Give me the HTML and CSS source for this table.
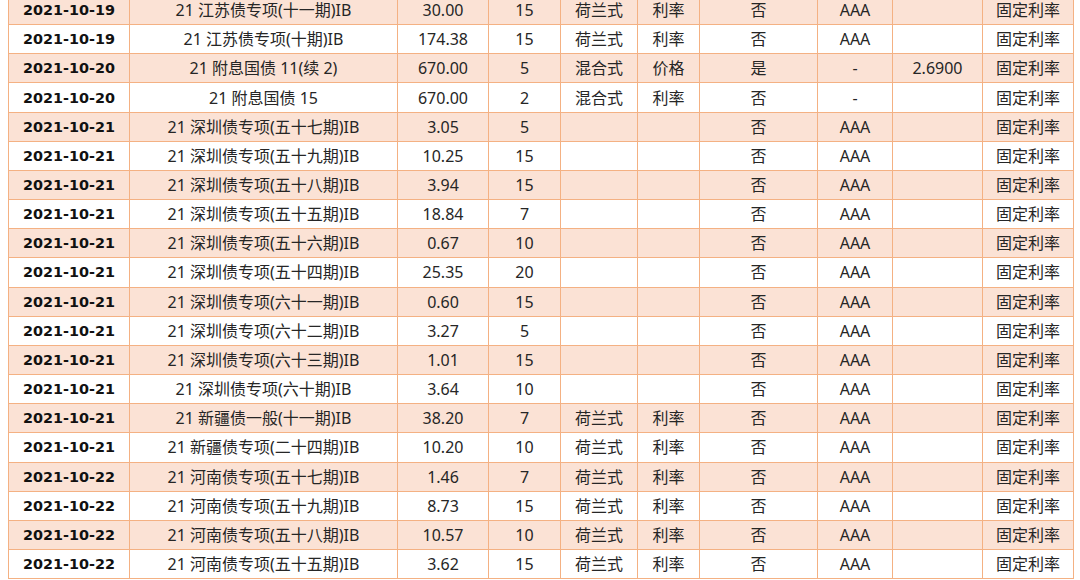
FILE: index.html
```html
<!DOCTYPE html>
<html lang="zh-CN">
<head>
<meta charset="utf-8">
<title>债券发行表</title>
<link rel="stylesheet" href="styles.css">
</head>
<body>
<table class="bonds">
<colgroup>
<col class="c-date"><col class="c-name"><col class="c-amt"><col class="c-term"><col class="c-type"><col class="c-mode"><col class="c-flag"><col class="c-rate"><col class="c-px"><col class="c-kind">
</colgroup>
<tbody>
<tr><td class="d">2021-10-19</td><td>21 江苏债专项(十一期)IB</td><td>30.00</td><td>15</td><td>荷兰式</td><td>利率</td><td>否</td><td>AAA</td><td></td><td>固定利率</td></tr>
<tr><td class="d">2021-10-19</td><td>21 江苏债专项(十期)IB</td><td>174.38</td><td>15</td><td>荷兰式</td><td>利率</td><td>否</td><td>AAA</td><td></td><td>固定利率</td></tr>
<tr><td class="d">2021-10-20</td><td>21 附息国债 11(续 2)</td><td>670.00</td><td>5</td><td>混合式</td><td>价格</td><td>是</td><td>-</td><td>2.6900</td><td>固定利率</td></tr>
<tr><td class="d">2021-10-20</td><td>21 附息国债 15</td><td>670.00</td><td>2</td><td>混合式</td><td>利率</td><td>否</td><td>-</td><td></td><td>固定利率</td></tr>
<tr><td class="d">2021-10-21</td><td>21 深圳债专项(五十七期)IB</td><td>3.05</td><td>5</td><td></td><td></td><td>否</td><td>AAA</td><td></td><td>固定利率</td></tr>
<tr><td class="d">2021-10-21</td><td>21 深圳债专项(五十九期)IB</td><td>10.25</td><td>15</td><td></td><td></td><td>否</td><td>AAA</td><td></td><td>固定利率</td></tr>
<tr><td class="d">2021-10-21</td><td>21 深圳债专项(五十八期)IB</td><td>3.94</td><td>15</td><td></td><td></td><td>否</td><td>AAA</td><td></td><td>固定利率</td></tr>
<tr><td class="d">2021-10-21</td><td>21 深圳债专项(五十五期)IB</td><td>18.84</td><td>7</td><td></td><td></td><td>否</td><td>AAA</td><td></td><td>固定利率</td></tr>
<tr><td class="d">2021-10-21</td><td>21 深圳债专项(五十六期)IB</td><td>0.67</td><td>10</td><td></td><td></td><td>否</td><td>AAA</td><td></td><td>固定利率</td></tr>
<tr><td class="d">2021-10-21</td><td>21 深圳债专项(五十四期)IB</td><td>25.35</td><td>20</td><td></td><td></td><td>否</td><td>AAA</td><td></td><td>固定利率</td></tr>
<tr><td class="d">2021-10-21</td><td>21 深圳债专项(六十一期)IB</td><td>0.60</td><td>15</td><td></td><td></td><td>否</td><td>AAA</td><td></td><td>固定利率</td></tr>
<tr><td class="d">2021-10-21</td><td>21 深圳债专项(六十二期)IB</td><td>3.27</td><td>5</td><td></td><td></td><td>否</td><td>AAA</td><td></td><td>固定利率</td></tr>
<tr><td class="d">2021-10-21</td><td>21 深圳债专项(六十三期)IB</td><td>1.01</td><td>15</td><td></td><td></td><td>否</td><td>AAA</td><td></td><td>固定利率</td></tr>
<tr><td class="d">2021-10-21</td><td>21 深圳债专项(六十期)IB</td><td>3.64</td><td>10</td><td></td><td></td><td>否</td><td>AAA</td><td></td><td>固定利率</td></tr>
<tr><td class="d">2021-10-21</td><td>21 新疆债一般(十一期)IB</td><td>38.20</td><td>7</td><td>荷兰式</td><td>利率</td><td>否</td><td>AAA</td><td></td><td>固定利率</td></tr>
<tr><td class="d">2021-10-21</td><td>21 新疆债专项(二十四期)IB</td><td>10.20</td><td>10</td><td>荷兰式</td><td>利率</td><td>否</td><td>AAA</td><td></td><td>固定利率</td></tr>
<tr><td class="d">2021-10-22</td><td>21 河南债专项(五十七期)IB</td><td>1.46</td><td>7</td><td>荷兰式</td><td>利率</td><td>否</td><td>AAA</td><td></td><td>固定利率</td></tr>
<tr><td class="d">2021-10-22</td><td>21 河南债专项(五十九期)IB</td><td>8.73</td><td>15</td><td>荷兰式</td><td>利率</td><td>否</td><td>AAA</td><td></td><td>固定利率</td></tr>
<tr><td class="d">2021-10-22</td><td>21 河南债专项(五十八期)IB</td><td>10.57</td><td>10</td><td>荷兰式</td><td>利率</td><td>否</td><td>AAA</td><td></td><td>固定利率</td></tr>
<tr><td class="d">2021-10-22</td><td>21 河南债专项(五十五期)IB</td><td>3.62</td><td>15</td><td>荷兰式</td><td>利率</td><td>否</td><td>AAA</td><td></td><td>固定利率</td></tr>
</tbody>
</table>
</body>
</html>
```
FILE: styles.css
```css
html, body {
  margin: 0;
  padding: 0;
  background: #ffffff;
}
body {
  overflow: hidden;
  height: 580px;
}
.bonds {
  margin: -5px 0 0 8px;
  border-collapse: collapse;
  table-layout: fixed;
  width: 1066px;
  font-family: "Noto Sans", "Noto Sans CJK SC", sans-serif;
  font-size: 16px;
  color: #262626;
}
.c-date { width: 121px; }
.c-name { width: 268px; }
.c-amt  { width: 91px; }
.c-term { width: 72px; }
.c-type { width: 77px; }
.c-mode { width: 62px; }
.c-flag { width: 118px; }
.c-rate { width: 75px; }
.c-px   { width: 90px; }
.c-kind { width: 91px; }
.bonds td {
  border: 1px solid #f4b183;
  height: 28.16px;
  padding: 0;
  text-align: center;
  vertical-align: middle;
  white-space: nowrap;
  line-height: 20px;
}
.bonds tr:nth-child(odd) td {
  background: #fbe2d5;
}
.bonds td.d {
  font-family: "DejaVu Sans", sans-serif;
  font-weight: bold;
  font-size: 14.4px;
  color: #111111;
}
```
